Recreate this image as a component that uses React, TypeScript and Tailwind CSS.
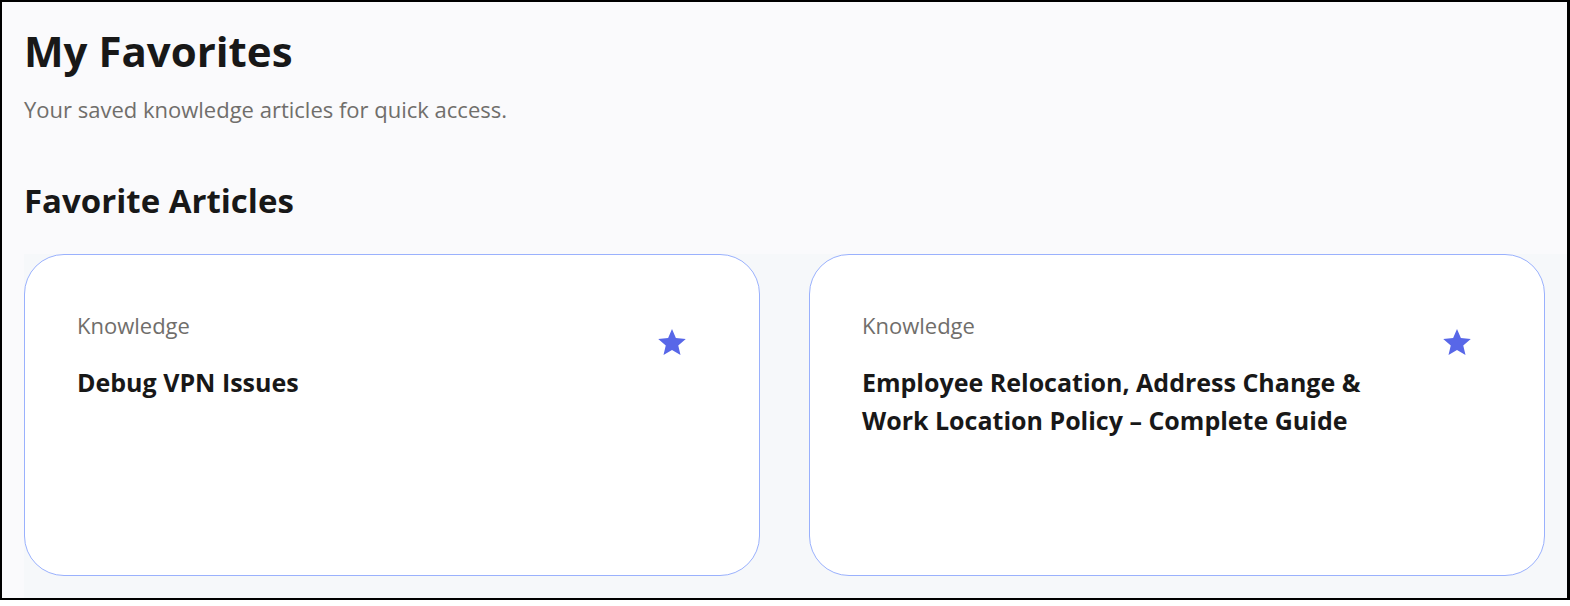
import React from "react";

function Star() {
  return (
    <svg width="30" height="29" viewBox="0 0 24 23" className="block">
      <path
        d="M12 0.6l3.1 7.3 7.9 0.7-6 5.2 1.8 7.7L12 17.4l-6.8 4.1 1.8-7.7-6-5.2 7.9-0.7z"
        fill="#5867e8"
      />
    </svg>
  );
}

function Card({ title }: { title: React.ReactNode }) {
  return (
    <div className="bg-white border-[1.5px] border-[#9ab1fd] rounded-[40px] h-[322px] w-[736px] shrink-0 pl-[52px] pr-[72px] pt-[56px] flex justify-between">
      <div>
        <div className="text-[22px] leading-[28px] text-[#706e6b]">Knowledge</div>
        <div className="mt-[24px] text-[25px] leading-[38px] font-bold text-[#181818]">{title}</div>
      </div>
      <div className="pt-[17px]">
        <Star />
      </div>
    </div>
  );
}

export default function App() {
  return (
    <div className="w-[1570px] h-[606px] bg-white" style={{ fontFamily: "'Open Sans', 'Noto Sans', sans-serif" }}>
      <div className="h-[600px] border-2 border-r-[3px] border-black bg-[#fafafc] flex flex-col">
        <div className="pl-[22px] pt-[21px]">
          <h1 className="text-[42px] leading-[56px] font-bold text-[#181818]">My Favorites</h1>
          <p className="mt-[16px] text-[22px] leading-[28px] text-[#706e6b]">Your saved knowledge articles for quick access.</p>
          <h2 className="mt-[59px] text-[33px] leading-[38px] font-bold text-[#181818]">Favorite Articles</h2>
        </div>
        <div className="ml-[22px] mt-[34px] flex-1 bg-[#f6f8fa] flex gap-[49px]">
          <Card title="Debug VPN Issues" />
          <Card
            title={
              <>
                Employee Relocation, Address Change &amp;
                <br />
                Work Location Policy – Complete Guide
              </>
            }
          />
        </div>
      </div>
    </div>
  );
}
